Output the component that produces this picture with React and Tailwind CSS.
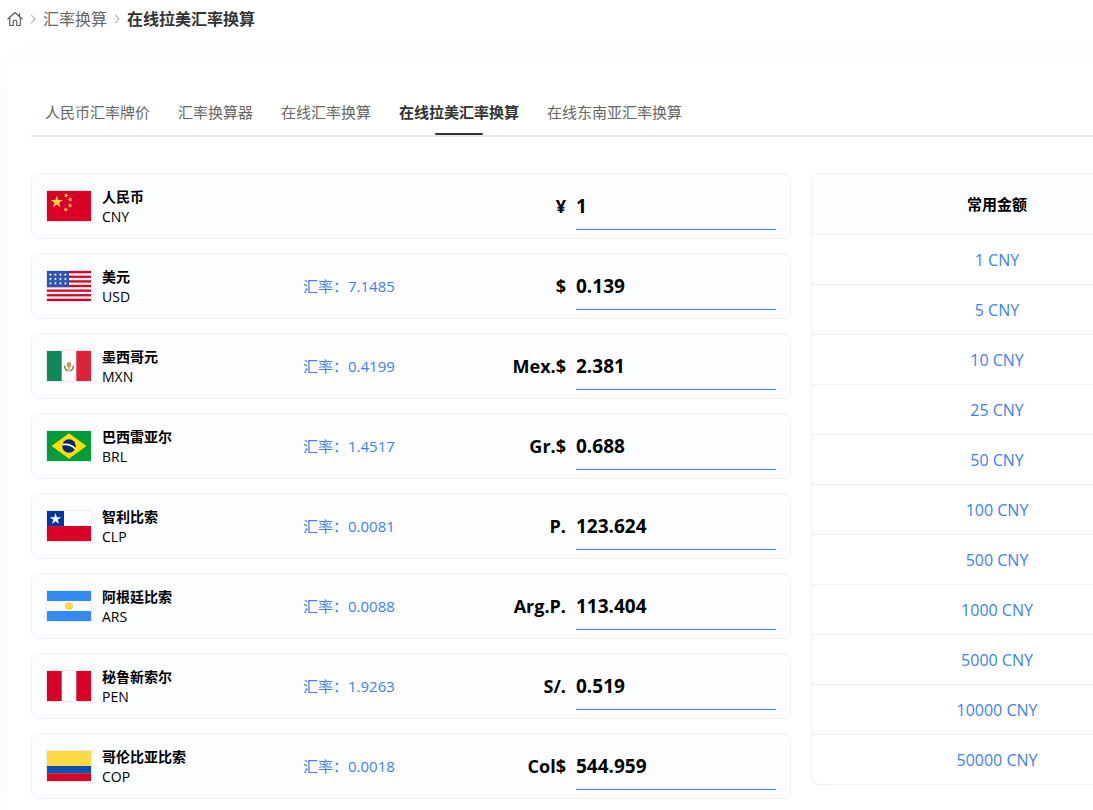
import { useState } from 'react';

const currencies = [
  { code: 'CNY', name: '人民币', symbol: '¥', amount: '1' },
  { code: 'USD', name: '美元', symbol: '$', rate: '7.1485', amount: '0.139' },
  { code: 'MXN', name: '墨西哥元', symbol: 'Mex.$', rate: '0.4199', amount: '2.381' },
  { code: 'BRL', name: '巴西雷亚尔', symbol: 'Gr.$', rate: '1.4517', amount: '0.688' },
  { code: 'CLP', name: '智利比索', symbol: 'P.', rate: '0.0081', amount: '123.624' },
  { code: 'ARS', name: '阿根廷比索', symbol: 'Arg.P.', rate: '0.0088', amount: '113.404' },
  { code: 'PEN', name: '秘鲁新索尔', symbol: 'S/.', rate: '1.9263', amount: '0.519' },
  { code: 'COP', name: '哥伦比亚比索', symbol: 'Col$', rate: '0.0018', amount: '544.959' },
];

const presets = [1, 5, 10, 25, 50, 100, 500, 1000, 5000, 10000, 50000];

const tabs = ['人民币汇率牌价', '汇率换算器', '在线汇率换算', '在线拉美汇率换算', '在线东南亚汇率换算'];
const activeTab = '在线拉美汇率换算';

const STAR = '0,-1 0.225,-0.309 0.951,-0.309 0.363,0.118 0.588,0.809 0,0.382 -0.588,0.809 -0.363,0.118 -0.951,-0.309 -0.225,-0.309';

const Star = ({ x, y, r, fill, rotate = 0 }) => (
  <polygon points={STAR} fill={fill} transform={`translate(${x} ${y}) rotate(${rotate}) scale(${r})`} />
);

// All flags are drawn on a 44x30 field
const flags = {
  CNY: (
    <>
      <rect width="44" height="30" fill="#d80027" />
      <Star x={9.8} y={11} r={6.4} fill="#ffda44" />
      <Star x={19.2} y={4.5} r={2.6} fill="#ffda44" rotate={20} />
      <Star x={23.2} y={8.6} r={2.6} fill="#ffda44" rotate={-15} />
      <Star x={23} y={14.6} r={2.6} fill="#ffda44" />
      <Star x={18.8} y={18.6} r={2.6} fill="#ffda44" rotate={20} />
    </>
  ),
  USD: (
    <>
      <rect width="44" height="30" fill="#fff" />
      {[0, 1, 2, 3, 4, 5, 6].map((i) => (
        <rect key={i} y={i * 4.62} width="44" height="2.31" fill="#d80027" />
      ))}
      <rect width="22" height="16.2" fill="#2e52b2" />
      {[3.6, 8, 12.4].map((y) =>
        [3.4, 8.4, 13.4, 18.4].map((x) => <Star key={`${x}-${y}`} x={x} y={y} r={1.7} fill="#fff" />)
      )}
    </>
  ),
  MXN: (
    <>
      <rect width="44" height="30" fill="#fff" />
      <rect width="14.7" height="30" fill="#12875a" />
      <rect x="29.3" width="14.7" height="30" fill="#dc2339" />
      <path d="M17.6 14.5c0 3 1.6 4.9 3.8 5.2M26.4 14.5c0 3-1.6 4.9-3.8 5.2" fill="none" stroke="#7a9a4c" strokeWidth="1.6" />
      <ellipse cx="22" cy="13.8" rx="2.2" ry="2.8" fill="#c9956b" />
      <path d="M22 16.5v2" stroke="#a57a52" strokeWidth="1.2" />
    </>
  ),
  BRL: (
    <>
      <rect width="44" height="30" fill="#009b3a" />
      <path d="M22 2.2 39.5 15 22 27.8 4.5 15z" fill="#fedf00" />
      <circle cx="22" cy="15" r="6.8" fill="#002776" />
      <path d="M15.4 13.7c4.8-.9 9.6.8 13 4.1" fill="none" stroke="#fff" strokeWidth="1.8" />
    </>
  ),
  CLP: (
    <>
      <rect width="44" height="30" fill="#fff" />
      <rect y="15" width="44" height="15" fill="#d80027" />
      <rect width="17" height="15" fill="#0037a1" />
      <Star x={8.5} y={8} r={6} fill="#fff" />
    </>
  ),
  ARS: (
    <>
      <rect width="44" height="30" fill="#fff" />
      <rect width="44" height="10" fill="#338af3" />
      <rect y="20" width="44" height="10" fill="#338af3" />
      <circle cx="22" cy="15" r="3.8" fill="#ffda44" stroke="#f2c93a" strokeWidth=".5" />
    </>
  ),
  PEN: (
    <>
      <rect width="44" height="30" fill="#fff" />
      <rect width="14.7" height="30" fill="#d80027" />
      <rect x="29.3" width="14.7" height="30" fill="#d80027" />
    </>
  ),
  COP: (
    <>
      <rect width="44" height="30" fill="#ffda44" />
      <rect y="15" width="44" height="7.5" fill="#0052b4" />
      <rect y="22.5" width="44" height="7.5" fill="#d80027" />
    </>
  ),
};

const Flag = ({ code }) => (
  <svg viewBox="0 0 44 30" className="box-content h-[30px] w-11 shrink-0 border border-[#ebebee]" aria-hidden="true">
    {flags[code]}
  </svg>
);

const HomeIcon = () => (
  <svg viewBox="0 0 16 16" className="h-4 w-4" fill="none" stroke="#4b5563" strokeWidth="1.1" aria-hidden="true">
    <path
      d="M.8 8 8 1.5 15.2 8M12.5 5.3V2.5M2.7 6.7v7.8h3.5v-4.3a1 1 0 0 1 1-1h1.6a1 1 0 0 1 1 1v4.3h3.5V6.7"
      strokeLinejoin="round"
      strokeLinecap="round"
    />
  </svg>
);

const Separator = () => (
  <svg viewBox="0 0 6 10" className="h-2.5 w-1.5" fill="none" stroke="#b4b8c0" strokeWidth="1.2" aria-hidden="true">
    <path d="M1 .8 5 5 1 9.2" />
  </svg>
);

const CurrencyRow = ({ currency, value, onChange }) => (
  <li className="flex h-[66px] items-center rounded-lg border border-[#edf1fc] bg-[#fcfdff] px-3.5">
    <Flag code={currency.code} />
    <label htmlFor={currency.code} className="ml-2.5 w-[201px] pt-0.5 text-sm leading-5 text-black">
      <span className="block font-bold">{currency.name}</span>
      <span className="block">{currency.code}</span>
    </label>
    <span className="flex-1 text-[15px] text-[#3b82f6]">{currency.rate && `汇率：${currency.rate}`}</span>
    <span className="text-lg font-bold text-black">{currency.symbol}</span>
    <input
      id={currency.code}
      value={value}
      onChange={(e) => onChange(e.target.value)}
      className="ml-2.5 h-12 w-[200px] border-b border-[#3b82f6] bg-transparent text-[19px] font-bold text-black outline-none"
    />
  </li>
);

const App = () => {
  const [amounts, setAmounts] = useState(() => Object.fromEntries(currencies.map((c) => [c.code, c.amount])));

  const convert = (code, value) => {
    const rateOf = (c) => Number(c.rate || 1);
    const source = currencies.find((c) => c.code === code);
    const cny = Number(value) * rateOf(source);
    if (Number.isNaN(cny)) return;
    setAmounts(
      Object.fromEntries(
        currencies.map((c) => [c.code, c.code === code ? String(value) : String(Number((cny / rateOf(c)).toFixed(3)))])
      )
    );
  };

  return (
    <div className="min-h-screen overflow-x-hidden bg-white px-[7px] pb-6 font-['Open_Sans','Noto_Sans_CJK_SC',sans-serif]">
      <div className="min-w-[1200px]">
        {/* Breadcrumb */}
        <nav className="flex h-[38px] items-center gap-[7px] text-base text-[#666]">
          <a href="#home" aria-label="首页">
            <HomeIcon />
          </a>
          <Separator />
          <a href="#rates">汇率换算</a>
          <Separator />
          <span className="font-bold text-[#333]">在线拉美汇率换算</span>
        </nav>

        <main className="mt-6 rounded-lg bg-white px-6 pt-7 pb-6 shadow-[0_0_30px_rgba(0,0,0,0.03)]">
          {/* Tabs */}
          <nav className="flex gap-7 border-b-2 border-[#e8e8e8] px-3.5">
            {tabs.map((tab) => (
              <a
                key={tab}
                href="#tab"
                className={
                  tab === activeTab
                    ? 'flex h-[45px] flex-col items-center justify-between pt-3 text-[15px] leading-5 font-bold text-[#333]'
                    : 'h-[45px] pt-3 text-[15px] leading-5 text-[#666]'
                }
              >
                {tab}
                {tab === activeTab && <span className="h-0.5 w-12 rounded-full bg-[#333]" />}
              </a>
            ))}
          </nav>

          <div className="mt-9 flex items-start gap-5">
            {/* Converter */}
            <ul className="flex min-w-0 flex-1 flex-col gap-3.5">
              {currencies.map((c) => (
                <CurrencyRow key={c.code} currency={c} value={amounts[c.code]} onChange={(v) => convert(c.code, v)} />
              ))}
            </ul>

            {/* Preset amounts */}
            <section className="w-[372px] shrink-0 overflow-hidden rounded-lg border border-[#edf1fc]">
              <h2 className="flex h-[60px] items-center justify-center bg-[#fcfdff] text-[15px] font-bold text-black">常用金额</h2>
              {presets.map((n) => (
                <button
                  key={n}
                  type="button"
                  onClick={() => convert('CNY', n)}
                  className="block h-[50px] w-full border-t border-[#edf1fc] text-base text-[#3b82f6]"
                >
                  {n} CNY
                </button>
              ))}
            </section>
          </div>
        </main>
      </div>
    </div>
  );
};

export default App;
